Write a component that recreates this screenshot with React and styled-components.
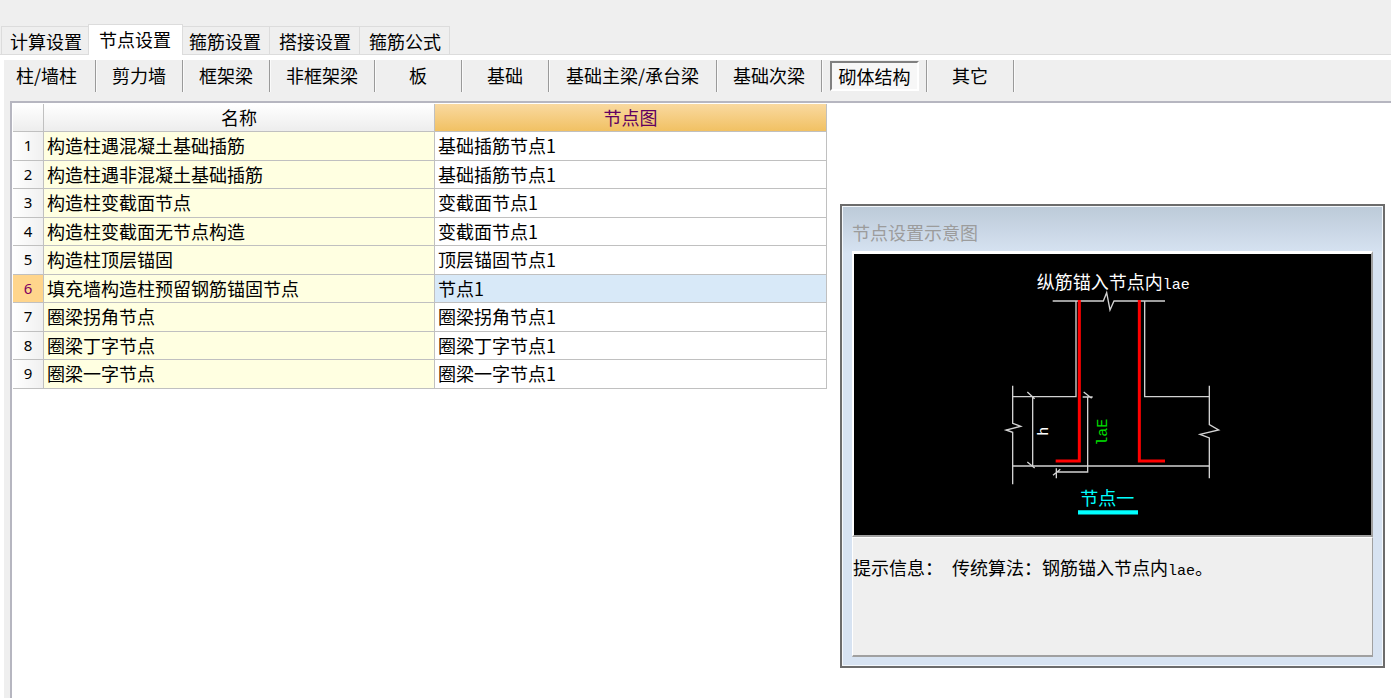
import React, { useState } from 'react'
import styled, { createGlobalStyle, css } from 'styled-components'

const tabs = ['计算设置', '节点设置', '箍筋设置', '搭接设置', '箍筋公式']

const members = [
  { name: '柱/墙柱', width: 92 },
  { name: '剪力墙', width: 87 },
  { name: '框架梁', width: 87 },
  { name: '非框架梁', width: 105 },
  { name: '板', width: 87 },
  { name: '基础', width: 87 },
  { name: '基础主梁/承台梁', width: 168 },
  { name: '基础次梁', width: 105 },
  { name: '砌体结构', width: 105 },
  { name: '其它', width: 87 },
]

const rows = [
  ['构造柱遇混凝土基础插筋', '基础插筋节点1'],
  ['构造柱遇非混凝土基础插筋', '基础插筋节点1'],
  ['构造柱变截面节点', '变截面节点1'],
  ['构造柱变截面无节点构造', '变截面节点1'],
  ['构造柱顶层锚固', '顶层锚固节点1'],
  ['填充墙构造柱预留钢筋锚固节点', '节点1'],
  ['圈梁拐角节点', '圈梁拐角节点1'],
  ['圈梁丁字节点', '圈梁丁字节点1'],
  ['圈梁一字节点', '圈梁一字节点1'],
]

const Diagram = () => (
  <Drawing viewBox="-408 -18 1551 843" role="img" aria-label="节点一">
    <g fill="none" stroke="#d2d2d2" strokeWidth="4">
      <path d="M188 123H340L350 98L360 150L372 123H525" />
      <path d="M258 123V410H68M464 123V410H658" />
      <path d="M68 618H658" />
      <path d="M68 377V490L92 499L48 510L68 517V673" />
      <path d="M658 377V494L686 510L630 523L658 534V655" />
      <path d="M128 410V618M112 396L134 416M112 606L134 624" />
      <path d="M293 410V636H198M278 411H308M281 396L305 415M199 625V655M189 646L211 628" />
    </g>
    <g fill="none" stroke="#ff0000" strokeWidth="9">
      <path d="M268 120V603H197" />
      <path d="M448 120V603H525" />
    </g>
    <Label x="140" y="88">
      纵筋锚入节点内<MonoLabel>lae</MonoLabel>
    </Label>
    <Label transform="translate(175 527) rotate(-90)">
      <MonoLabel>h</MonoLabel>
    </Label>
    <Label transform="translate(350 557) rotate(-90)">
      <MonoLabel $color="#00e000">laE</MonoLabel>
    </Label>
    <Label x="271" y="736" $color="#00ffff">节点一</Label>
    <path d="M264 757H444" stroke="#00ffff" strokeWidth="13" />
  </Drawing>
)

const App = () => {
  const [tab, setTab] = useState(1)
  const [member, setMember] = useState(8)
  const [selected, setSelected] = useState(5)

  return (
    <Page>
      <GlobalStyle />
      <TabBar role="tablist">
        {tabs.map((name, i) => (
          <Tab key={name} role="tab" aria-selected={tab === i} $active={tab === i} onClick={() => setTab(i)}>
            {name}
          </Tab>
        ))}
      </TabBar>
      <Panel>
        <MemberBar>
          {members.map((m, i) => (
            <MemberCell key={m.name} $width={m.width}>
              <MemberButton $pressed={member === i} onClick={() => setMember(i)}>
                {m.name}
              </MemberButton>
            </MemberCell>
          ))}
        </MemberBar>
        <GridPane>
          <Table>
            <thead>
              <tr>
                <HeadCell $width={31} />
                <HeadCell $width={391}>名称</HeadCell>
                <HeadCell $width={392} $current>节点图</HeadCell>
              </tr>
            </thead>
            <tbody>
              {rows.map(([name, node], i) => (
                <Row key={name} onClick={() => setSelected(i)}>
                  <IndexCell scope="row" $current={selected === i}>{i + 1}</IndexCell>
                  <NameCell>{name}</NameCell>
                  <NodeCell $current={selected === i}>{node}</NodeCell>
                </Row>
              ))}
            </tbody>
          </Table>
        </GridPane>
      </Panel>
      <Dialog role="dialog" aria-labelledby="dialog-title">
        <DialogTitle id="dialog-title">节点设置示意图</DialogTitle>
        <Canvas>
          <Diagram />
        </Canvas>
        <Hint>
          提示信息：<Mono> </Mono>传统算法：钢筋锚入节点内<Mono>lae</Mono>。
        </Hint>
      </Dialog>
    </Page>
  )
}

const GlobalStyle = createGlobalStyle`
  * {
    box-sizing: border-box;
  }

  body {
    margin: 0;
    background: #fff;
    color: #000;
    font-family: 'Noto Sans CJK SC', sans-serif;
    font-size: 18px;
    line-height: 24px;
  }

  button {
    padding: 0;
    border: 0;
    background: none;
    color: inherit;
    font: inherit;
    white-space: nowrap;
  }
`

const Page = styled.div`
  position: relative;
  display: flex;
  flex-direction: column;
  min-height: 100vh;
`

const TabBar = styled.div`
  display: flex;
  align-items: flex-end;
  height: 55px;
  padding-left: 1px;
  background: #efefef;
  border-bottom: 1px solid #dcdcdc;
`

const Tab = styled.button`
  height: 28px;
  padding: 0 8px;
  border: 1px solid #dcdcdc;
  border-bottom: 0;

  & + & {
    border-left: 0;
    padding-left: 9px;
  }

  &:first-child {
    padding-right: 7px;
  }

  ${({ $active }) => $active && css`
    && {
      height: 31px;
      margin: 0 -3px -1px -2px;
      padding: 0 11px 2px 10px;
      border-left: 1px solid #dcdcdc;
      background: #fff;
      z-index: 1;
    }
  `}
`

const Panel = styled.div`
  flex: 1;
  display: flex;
  flex-direction: column;
  margin: 5px 0 0 4px;
  padding-left: 6px;
  background: #efefef;
`

const MemberBar = styled.div`
  display: flex;
  height: 41px;
  margin-left: -6px;
`

const MemberCell = styled.div`
  display: flex;
  align-items: center;
  justify-content: center;
  width: ${({ $width }) => $width}px;
  height: 32px;
  border-right: 1px solid #9a9a9a;
  box-shadow: 1px 0 #fafafa;

  &:first-child {
    padding-right: 6px;
  }
`

const MemberButton = styled.button`
  height: 30px;
  padding: 0 6px 2px;

  ${({ $pressed }) => $pressed && css`
    padding: 0 6px 0 7px;
    border: 2px solid #fff;
    border-top-color: #808080;
    border-left-color: #808080;
    background: #f7f7f7;
  `}
`

const GridPane = styled.div`
  flex: 1;
  padding: 1px;
  border: 2px solid #b6b6c0;
  border-right: 0;
  border-bottom: 0;
  background: #fff;
`

const Table = styled.table`
  border-collapse: separate;
  border-spacing: 0;
  table-layout: fixed;
  width: 814px;
`

const HeadCell = styled.th`
  width: ${({ $width }) => $width}px;
  height: 28px;
  padding: 0 0 2px;
  border-right: 1px solid #c0c0c0;
  border-bottom: 1px solid #c0c0c0;
  background: linear-gradient(#fff, #ededed);
  font-weight: 400;

  ${({ $current }) => $current && css`
    background: linear-gradient(#f9d9a0, #f1c163);
    color: #600060;
  `}
`

const Row = styled.tr`
  height: 28px;

  &:nth-child(odd) {
    height: 29px;
  }
`

const IndexCell = styled.th`
  padding: 0 0 2px;
  border-right: 1px solid #c0c0c0;
  border-bottom: 1px solid #c0c0c0;
  background: ${({ $current }) => ($current ? '#ffd58c' : 'linear-gradient(90deg, #fff, #f0f0f0)')};
  color: ${({ $current }) => ($current ? '#800060' : '#000')};
  font-family: 'Noto Sans', sans-serif;
  font-size: 15px;
  font-weight: 400;
`

const NameCell = styled.td`
  padding: 0 3px 2px;
  border-right: 1px solid #c0c0c0;
  border-bottom: 1px solid #c0c0c0;
  background: #ffffe1;
`

const NodeCell = styled(NameCell)`
  background: ${({ $current }) => ($current ? '#d8e9f8' : '#fff')};
`

const Dialog = styled.section`
  position: absolute;
  top: 204px;
  right: 6px;
  width: 545px;
  padding: 1px 10px 9px;
  border: 2px solid #6c6c6c;
  box-shadow: inset 0 0 0 1px #f4f8fc;
  background: linear-gradient(#bccad8, #d7e3f2 48px);
`

const DialogTitle = styled.h2`
  margin: 0;
  padding: 13px 0 7px;
  color: #9c9c9c;
  font-size: 18px;
  font-weight: 400;
`

const Canvas = styled.div`
  border: 2px solid #fff;
  border-top-width: 3px;
  border-right-color: #a0a0a0;
  border-bottom-color: #a0a0a0;
  background: #000;
`

const Drawing = styled.svg`
  display: block;
  width: 100%;
`

const Label = styled.text`
  fill: ${({ $color }) => $color || '#fff'};
  font-size: 54px;
`

const MonoLabel = styled.tspan`
  fill: ${({ $color }) => $color || '#fff'};
  font-family: 'Liberation Mono', monospace;
  font-size: 45px;
`

const Hint = styled.p`
  min-height: 120px;
  margin: 0;
  padding: 17px 0;
  border: 1px solid #fff;
  border-right-color: #a0a0a0;
  border-bottom: 2px solid #a0a0a0;
  background: #efefef;
`

const Mono = styled.span`
  font-family: 'Liberation Mono', monospace;
  font-size: 15px;
`

export default App
